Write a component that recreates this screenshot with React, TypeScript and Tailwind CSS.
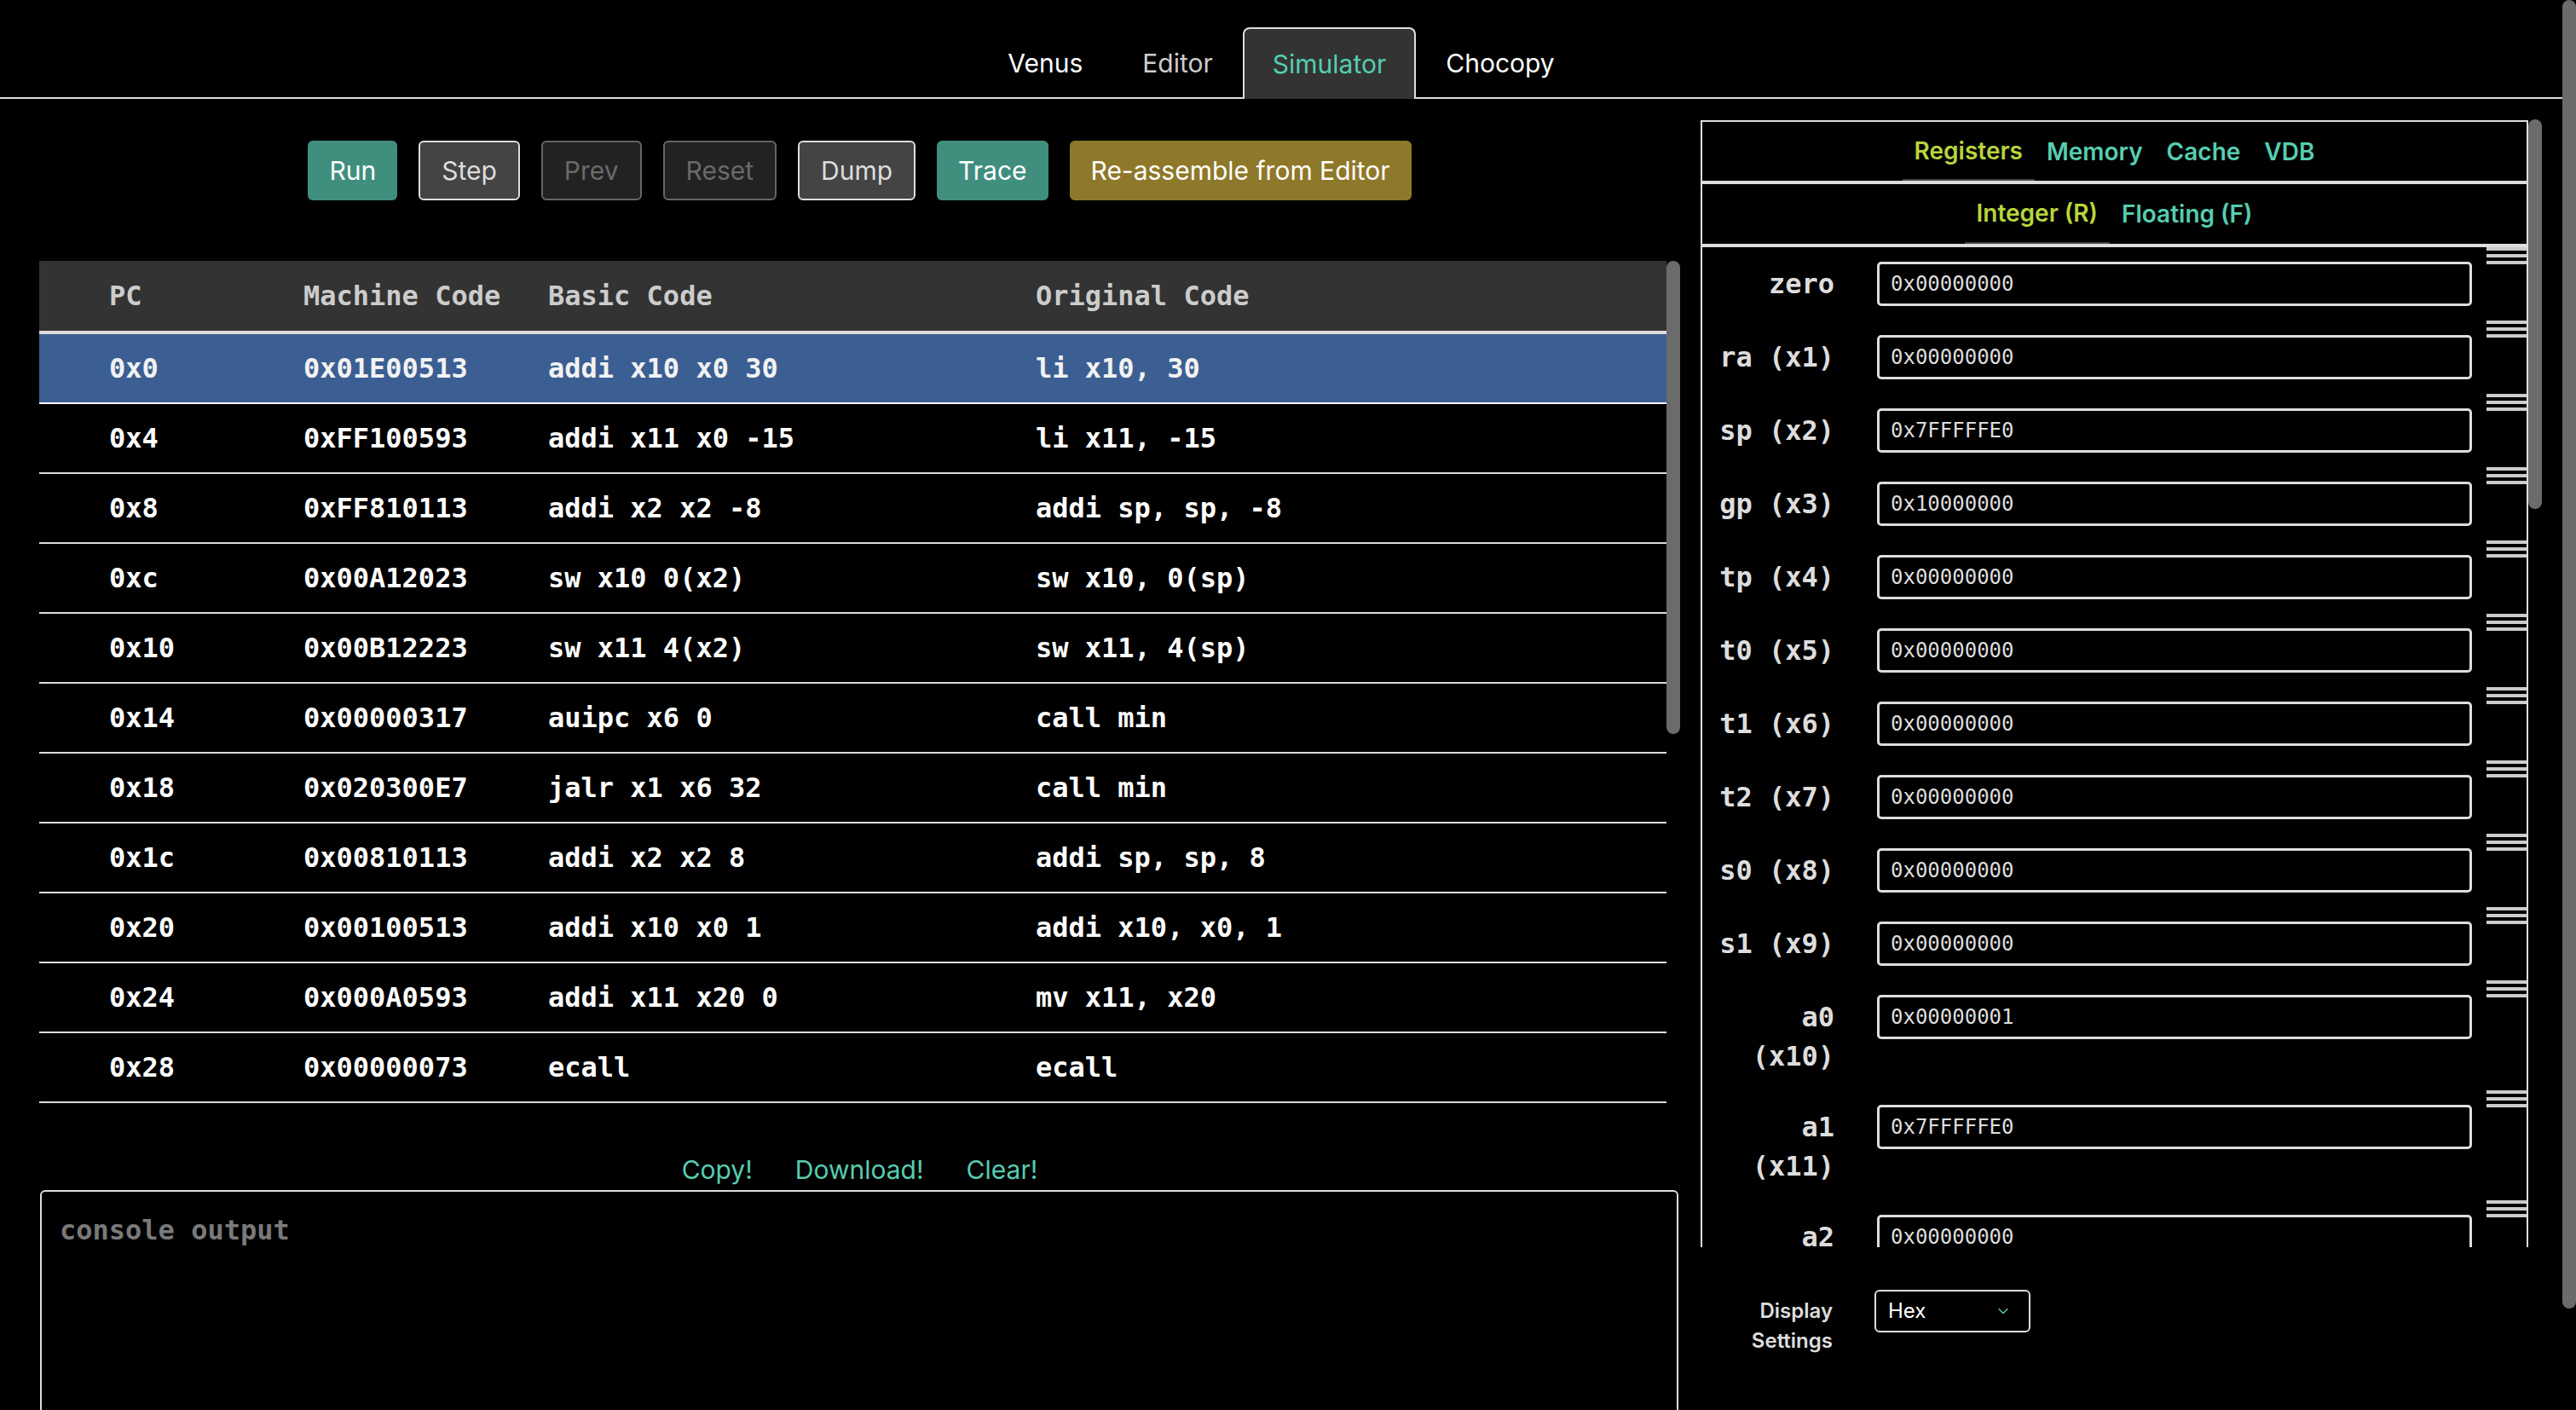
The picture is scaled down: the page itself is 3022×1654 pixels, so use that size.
import { ChevronDown } from "lucide-react";

const MONO = { fontFamily: '"DejaVu Sans Mono", "Liberation Mono", monospace' };
const SANS = { fontFamily: 'Inter, "Noto Sans", "Liberation Sans", sans-serif' };

const rows = [
  ["0x0", "0x01E00513", "addi x10 x0 30", "li x10, 30"],
  ["0x4", "0xFF100593", "addi x11 x0 -15", "li x11, -15"],
  ["0x8", "0xFF810113", "addi x2 x2 -8", "addi sp, sp, -8"],
  ["0xc", "0x00A12023", "sw x10 0(x2)", "sw x10, 0(sp)"],
  ["0x10", "0x00B12223", "sw x11 4(x2)", "sw x11, 4(sp)"],
  ["0x14", "0x00000317", "auipc x6 0", "call min"],
  ["0x18", "0x020300E7", "jalr x1 x6 32", "call min"],
  ["0x1c", "0x00810113", "addi x2 x2 8", "addi sp, sp, 8"],
  ["0x20", "0x00100513", "addi x10 x0 1", "addi x10, x0, 1"],
  ["0x24", "0x000A0593", "addi x11 x20 0", "mv x11, x20"],
  ["0x28", "0x00000073", "ecall", "ecall"],
];

const registers = [
  ["zero", "0x00000000"],
  ["ra (x1)", "0x00000000"],
  ["sp (x2)", "0x7FFFFFE0"],
  ["gp (x3)", "0x10000000"],
  ["tp (x4)", "0x00000000"],
  ["t0 (x5)", "0x00000000"],
  ["t1 (x6)", "0x00000000"],
  ["t2 (x7)", "0x00000000"],
  ["s0 (x8)", "0x00000000"],
  ["s1 (x9)", "0x00000000"],
  ["a0 (x10)", "0x00000001"],
  ["a1 (x11)", "0x7FFFFFE0"],
  ["a2 (x12)", "0x00000000"],
];

function NavTab({ label, active, dim }: { label: string; active?: boolean; dim?: boolean }) {
  if (active) {
    return (
      <div className="h-[84px] -mb-[2px] px-[33px] flex items-center bg-[#333333] border-2 border-b-0 border-[#dddddd] rounded-t-[8px] text-[30px] text-[#56cdb0]">
        {label}
      </div>
    );
  }
  return (
    <div className={`h-[84px] -mb-[2px] px-[35px] flex items-center text-[30px] ${dim ? "text-[#cccccc]" : "text-white"}`}>
      {label}
    </div>
  );
}

function Btn({ label, kind }: { label: string; kind: "teal" | "grey" | "off" | "gold" }) {
  const cls = {
    teal: "bg-[#408e7e] text-white",
    grey: "bg-[#444444] border-2 border-[#dddddd] text-[#dddddd]",
    off: "bg-[#222222] border-2 border-[#666666] text-[#6a6a6a]",
    gold: "bg-[#8e7829] text-white",
  }[kind];
  return (
    <button className={`h-[70px] px-[25px] rounded-[6px] text-[30px] flex items-center ${cls}`} style={SANS}>
      {label}
    </button>
  );
}

function Handle() {
  return (
    <div className="w-[47px] flex flex-col gap-[4px] shrink-0">
      <div className="h-[4px] bg-[#cccccc]" />
      <div className="h-[4px] bg-[#cccccc]" />
      <div className="h-[4px] bg-[#cccccc]" />
    </div>
  );
}

export default function App() {
  return (
    <div className="w-[3022px] h-[1654px] bg-black flex overflow-hidden" style={SANS}>
      <div className="w-[3006px] flex flex-col">
        <nav className="h-[116px] shrink-0 border-b-2 border-[#dddddd] flex justify-center items-end">
          <NavTab label="Venus" />
          <NavTab label="Editor" dim />
          <NavTab label="Simulator" active />
          <NavTab label="Chocopy" />
        </nav>

        <div className="flex shrink-0">
          {/* simulator column */}
          <div className="w-[1995px] pl-[46px] pr-[24px] flex flex-col">
            <div className="mt-[49px] flex justify-center gap-[25px]">
              <Btn label="Run" kind="teal" />
              <Btn label="Step" kind="grey" />
              <Btn label="Prev" kind="off" />
              <Btn label="Reset" kind="off" />
              <Btn label="Dump" kind="grey" />
              <Btn label="Trace" kind="teal" />
              <Btn label="Re-assemble from Editor" kind="gold" />
            </div>

            <div className="mt-[71px] h-[988px] shrink-0 flex overflow-hidden">
              <div className="flex-1 text-[32px] font-bold" style={MONO}>
                <div className="h-[86px] bg-[#333333] border-b-4 border-[#dddddd] pl-[82px] grid grid-cols-[228px_287px_572px_1fr] items-center text-[#cccccc]">
                  <span>PC</span>
                  <span>Machine Code</span>
                  <span>Basic Code</span>
                  <span>Original Code</span>
                </div>
                {rows.map((r, i) => (
                  <div
                    key={r[0]}
                    className={`h-[82px] border-b-2 pl-[82px] grid grid-cols-[228px_287px_572px_1fr] items-center ${
                      i === 0 ? "bg-[#3c5f93] border-white text-[#f2f2f2]" : "border-[#dddddd] text-white"
                    }`}
                  >
                    <span>{r[0]}</span>
                    <span>{r[1]}</span>
                    <span className="whitespace-pre">{r[2]}</span>
                    <span className="whitespace-pre">{r[3]}</span>
                  </div>
                ))}
              </div>
              <div className="w-[16px]">
                <div className="h-[555px] rounded-full bg-[#6b6b6b]" />
              </div>
            </div>

            <div className="mt-[60px] h-[36px] flex justify-center gap-[50px] text-[30px] leading-[36px] text-[#56cdb0]">
              <span>Copy!</span>
              <span>Download!</span>
              <span>Clear!</span>
            </div>

            <textarea
              readOnly
              placeholder="console output"
              className="mt-[6px] ml-[1px] w-[1922px] h-[420px] shrink-0 resize-none bg-black border-2 border-[#dddddd] rounded-t-[6px] px-[21px] pt-[21px] text-[32px] font-bold text-white placeholder:text-[#7a7a7a] outline-none"
              style={MONO}
            />
          </div>

          {/* registers panel */}
          <div className="w-[987px] mt-[25px] flex flex-col">
            <div className="flex">
              <div className="w-[971px] h-[1322px] border-2 border-b-0 border-[#dddddd] flex flex-col overflow-hidden">
                <div className="h-[73px] shrink-0 border-b-4 border-[#dddddd] flex justify-center text-[28px] font-semibold">
                  <div className="px-[14px] flex items-center border-b-2 border-[#444444] text-[#b8d53c]">Registers</div>
                  <div className="px-[14px] flex items-center text-[#56cdb0]">Memory</div>
                  <div className="px-[14px] flex items-center text-[#56cdb0]">Cache</div>
                  <div className="px-[14px] flex items-center text-[#56cdb0]">VDB</div>
                </div>
                <div className="h-[74px] shrink-0 border-b-4 border-[#dddddd] flex justify-center text-[28px] font-semibold">
                  <div className="px-[14px] flex items-center border-b-2 border-[#444444] text-[#b8d53c]">Integer (R)</div>
                  <div className="px-[14px] flex items-center text-[#56cdb0]">Floating (F)</div>
                </div>
                <div className="flex-1 overflow-hidden">
                  {registers.map(([name, value]) => (
                    <div key={name} className="flex items-start pb-[17px]">
                      <div
                        className="ml-[10px] w-[145px] mt-[20px] text-right text-[32px] leading-[46px] font-bold text-[#dddddd] shrink-0"
                        style={MONO}
                      >
                        {name}
                      </div>
                      <input
                        readOnly
                        defaultValue={value}
                        className="ml-[50px] mt-[17px] w-[698px] h-[52px] shrink-0 bg-black border-[3px] border-[#dddddd] rounded-[5px] pl-[13px] text-[24px] text-[#dddddd] outline-none"
                        style={MONO}
                      />
                      <div className="ml-[17px]">
                        <Handle />
                      </div>
                    </div>
                  ))}
                </div>
              </div>
              <div className="w-[16px]">
                <div className="-mt-[1px] h-[457px] rounded-full bg-[#6b6b6b]" />
              </div>
            </div>

            <div className="mt-[50px] flex items-start">
              <div className="ml-[10px] w-[145px] mt-[7px] flex flex-col items-end text-[24px] leading-[35px] font-semibold text-[#dddddd]">
                <span>Display</span>
                <span>Settings</span>
              </div>
              <div className="ml-[49px] w-[183px] h-[50px] border-2 border-[#dddddd] rounded-[6px] flex items-center justify-between pl-[14px] pr-[20px] text-[24px] text-white">
                <span>Hex</span>
                <ChevronDown size={20} strokeWidth={1.5} className="text-[#56cdb0]" />
              </div>
            </div>
          </div>
        </div>
      </div>

      {/* page scrollbar */}
      <div className="w-[16px] shrink-0">
        <div className="h-[1535px] rounded-full bg-[#6b6b6b]" />
      </div>
    </div>
  );
}
